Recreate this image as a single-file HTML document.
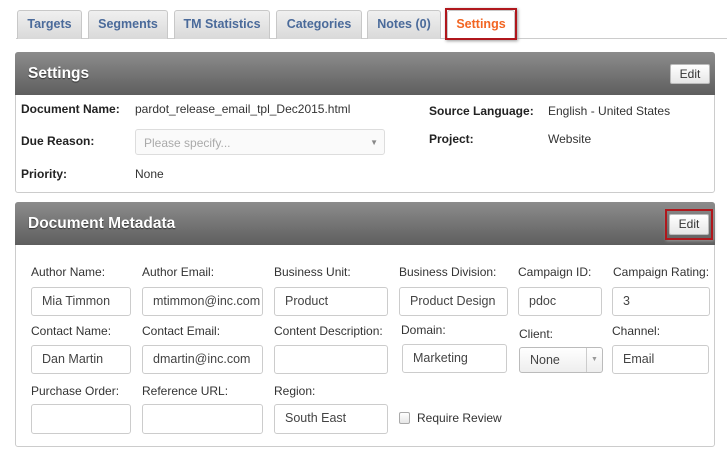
<!DOCTYPE html>
<html><head><style>
*{box-sizing:border-box;margin:0;padding:0}
body{width:727px;height:458px;background:#fff;font-family:"Liberation Sans",Arial,sans-serif;position:relative;overflow:hidden;font-size:12px;color:#333}
.a{position:absolute;white-space:nowrap}
.tab{position:absolute;top:10px;height:29px;border:1px solid #c8c8c8;border-bottom:none;border-radius:3px 3px 0 0;background:linear-gradient(#f0f0f0,#d9d9d9);color:#4a6a9a;font-weight:bold;font-size:12.5px;text-align:center;line-height:27px}
.hdr{position:absolute;left:15px;width:700px;height:43px;background:linear-gradient(#8c8c8c,#5e5e5e);border-radius:3px 3px 0 0}
.hdr span{position:absolute;left:13px;top:13px;color:#fff;font-weight:bold;font-size:15.5px;text-shadow:0 1px 1px #333}
.panel{position:absolute;left:15px;width:700px;border:1px solid #ccc;border-radius:3px}
.btn{position:absolute;background:linear-gradient(#fff,#e6e6e6);border:1px solid #bbb;border-radius:2px;font-size:12px;color:#333;text-align:center;line-height:18px}
.b{font-weight:bold;color:#222}
.in{position:absolute;border:1px solid #ccc;border-radius:3px;background:#fff;padding-left:10px;font-size:12.5px;color:#444;line-height:27px;overflow:hidden;white-space:nowrap}
.lb{position:absolute;font-size:12px;color:#333;white-space:nowrap}
</style></head><body>
<div class="a" style="left:16px;top:38px;width:711px;height:1px;background:#ccc"></div>
<div class="tab" style="left:17px;width:65px">Targets</div>
<div class="tab" style="left:88px;width:80px">Segments</div>
<div class="tab" style="left:174px;width:96px">TM Statistics</div>
<div class="tab" style="left:276px;width:86px">Categories</div>
<div class="tab" style="left:367px;width:74px">Notes (0)</div>
<div class="tab" style="left:447px;width:68px;background:#fff;color:#f26522;height:30px">Settings</div>
<div class="a" style="left:445px;top:8px;width:72px;height:32px;border:2px solid #b0171c;box-shadow:1px 1px 3px #999"></div>

<div class="panel" style="top:52px;height:141px"></div>
<div class="hdr" style="top:52px"><span>Settings</span></div>
<div class="btn" style="left:670px;top:64px;width:40px;height:20px">Edit</div>
<div class="a b" style="left:21px;top:102px">Document Name:</div>
<div class="a" style="left:135px;top:102px">pardot_release_email_tpl_Dec2015.html</div>
<div class="a b" style="left:21px;top:134px">Due Reason:</div>
<div class="a" style="left:135px;top:129px;width:250px;height:26px;border:1px solid #ddd;border-radius:3px;background:#fafafa;color:#aaa;padding:6px 8px">Please specify...<span style="position:absolute;right:6px;top:8px;font-size:8px;color:#888">▼</span></div>
<div class="a b" style="left:21px;top:167px">Priority:</div>
<div class="a" style="left:135px;top:167px">None</div>
<div class="a b" style="left:429px;top:104px">Source Language:</div>
<div class="a" style="left:548px;top:104px">English - United States</div>
<div class="a b" style="left:429px;top:132px">Project:</div>
<div class="a" style="left:548px;top:132px">Website</div>

<div class="panel" style="top:202px;height:245px"></div>
<div class="hdr" style="top:202px"><span>Document Metadata</span></div>
<div class="btn" style="left:669px;top:214px;width:40px;height:21px">Edit</div>
<div class="a" style="left:665px;top:209px;width:48px;height:31px;border:2px solid #b0171c;box-shadow:1px 1px 3px #999"></div>

<div class="lb" style="left:31px;top:265px">Author Name:</div>
<div class="lb" style="left:142px;top:265px">Author Email:</div>
<div class="lb" style="left:274px;top:265px">Business Unit:</div>
<div class="lb" style="left:399px;top:265px">Business Division:</div>
<div class="lb" style="left:518px;top:265px">Campaign ID:</div>
<div class="lb" style="left:613px;top:265px">Campaign Rating:</div>
<div class="in" style="left:31px;top:287px;width:100px;height:29px">Mia Timmon</div>
<div class="in" style="left:142px;top:287px;width:121px;height:29px">mtimmon@inc.com</div>
<div class="in" style="left:274px;top:287px;width:114px;height:29px">Product</div>
<div class="in" style="left:399px;top:287px;width:109px;height:29px">Product Design</div>
<div class="in" style="left:518px;top:287px;width:84px;height:29px">pdoc</div>
<div class="in" style="left:612px;top:287px;width:98px;height:29px">3</div>

<div class="lb" style="left:31px;top:324px">Contact Name:</div>
<div class="lb" style="left:142px;top:324px">Contact Email:</div>
<div class="lb" style="left:274px;top:324px">Content Description:</div>
<div class="lb" style="left:401px;top:323px">Domain:</div>
<div class="lb" style="left:519px;top:327px">Client:</div>
<div class="lb" style="left:612px;top:324px">Channel:</div>
<div class="in" style="left:31px;top:345px;width:100px;height:29px">Dan Martin</div>
<div class="in" style="left:142px;top:345px;width:121px;height:29px">dmartin@inc.com</div>
<div class="in" style="left:274px;top:345px;width:114px;height:29px"></div>
<div class="in" style="left:402px;top:344px;width:105px;height:29px">Marketing</div>
<div class="in" style="left:519px;top:347px;width:84px;height:26px;line-height:24px;background:linear-gradient(#fff,#eee);border-color:#bbb">None<span style="position:absolute;right:0;top:0;width:16px;height:24px;border-left:1px solid #ccc;font-size:7px;color:#999;text-align:center">▼</span></div>
<div class="in" style="left:612px;top:345px;width:97px;height:29px">Email</div>

<div class="lb" style="left:31px;top:384px">Purchase Order:</div>
<div class="lb" style="left:142px;top:384px">Reference URL:</div>
<div class="lb" style="left:274px;top:384px">Region:</div>
<div class="in" style="left:31px;top:404px;width:100px;height:30px"></div>
<div class="in" style="left:142px;top:404px;width:121px;height:30px"></div>
<div class="in" style="left:274px;top:404px;width:114px;height:30px">South East</div>
<div class="a" style="left:399px;top:412px;width:11px;height:12px;border:1px solid #aaa;border-radius:2px;background:linear-gradient(#fff,#e6e6e6)"></div>
<div class="lb" style="left:417px;top:411px">Require Review</div>
</body></html>
